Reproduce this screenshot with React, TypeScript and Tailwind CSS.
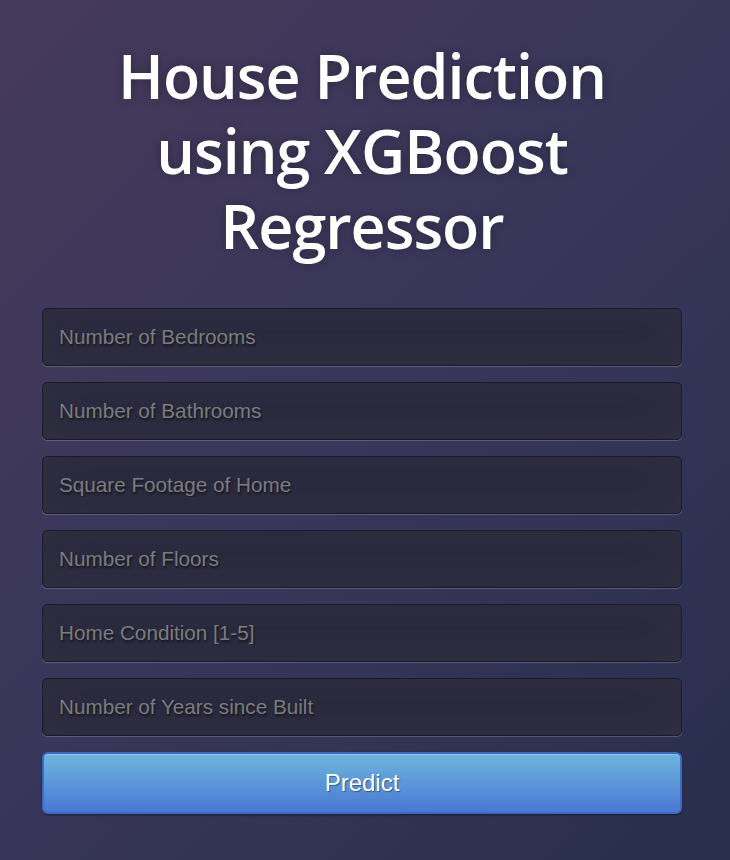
import React from "react";

const fields = [
  "Number of Bedrooms",
  "Number of Bathrooms",
  "Square Footage of Home",
  "Number of Floors",
  "Home Condition [1-5]",
  "Number of Years since Built",
];

export default function App() {
  return (
    <div className="min-h-[860px] w-full bg-[linear-gradient(135deg,#463a5a_0%,#38365a_50%,#292e4d_100%)] pt-[38px]">
      <div className="mx-auto w-[640px] -translate-x-[3px]">
        <h1 className="mx-auto w-[560px] text-center text-[61px] font-semibold leading-[75px] tracking-[-1px] text-white [font-family:'Open_Sans',sans-serif] [text-shadow:0_0_10px_rgba(0,0,0,0.3)]">
          House Prediction using XGBoost Regressor
        </h1>
        <form className="mt-[45px] flex flex-col gap-[16px]" onSubmit={(e) => e.preventDefault()}>
          {fields.map((f) => (
            <input
              key={f}
              type="text"
              placeholder={f}
              className="h-[58px] w-full rounded-[5px] border border-[#1a1a28] bg-[#29283d] px-[16px] text-[20.7px] text-[#888] outline-none placeholder:text-[#7b7b7e] [font-family:'Liberation_Sans',Arial,sans-serif] [text-shadow:1px_2px_2px_rgba(0,0,0,0.5)] placeholder:[text-shadow:1px_2px_2px_rgba(0,0,0,0.5)] shadow-[inset_0_-5px_45px_rgba(100,100,100,0.15),0_1px_1px_rgba(255,255,255,0.2)]"
            />
          ))}
          <button
            type="submit"
            className="h-[62px] w-full rounded-[6px] border-2 border-[#3d68c4] bg-[linear-gradient(to_bottom,#6eb6de,#4a77d4)] text-[24px] text-white [font-family:'Liberation_Sans',Arial,sans-serif] [text-shadow:1px_1px_1px_rgba(0,0,0,0.4)] shadow-[inset_0_1px_0_rgba(255,255,255,0.2),0_1px_2px_rgba(0,0,0,0.5)]"
          >
            Predict
          </button>
        </form>
      </div>
    </div>
  );
}
